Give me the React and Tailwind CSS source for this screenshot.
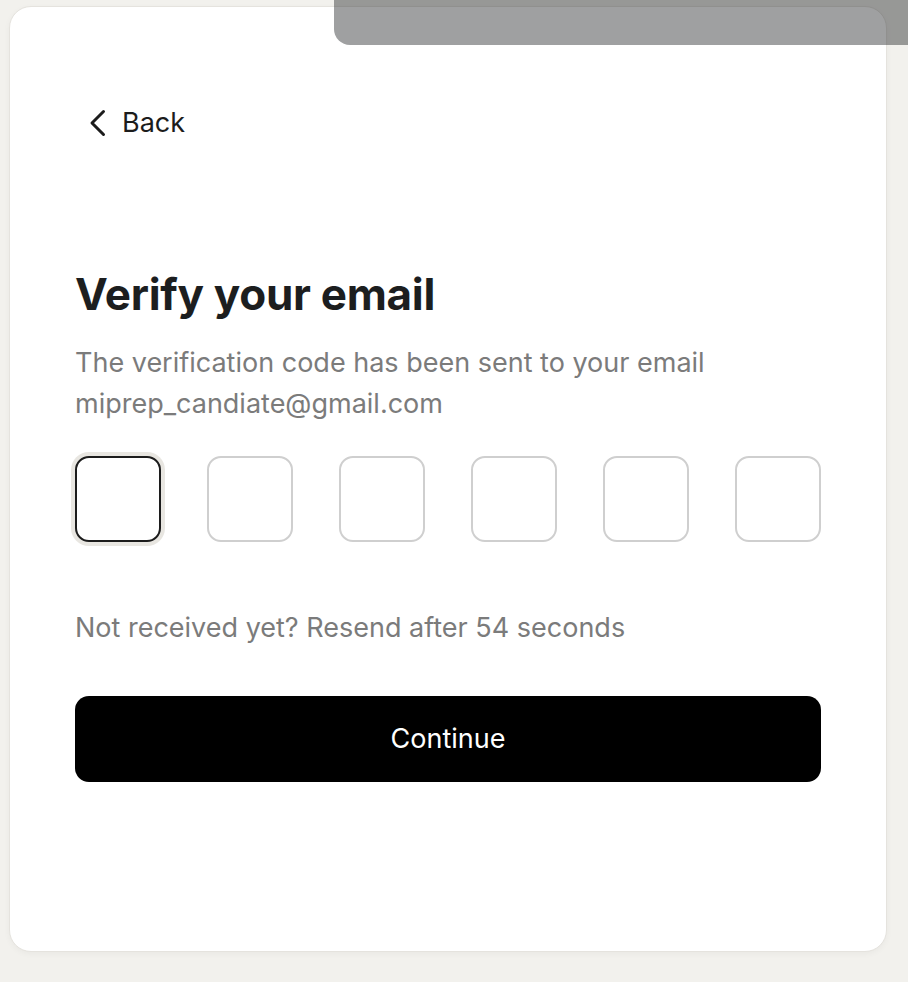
import React from 'react';

const Toast = () => (
    <div className="absolute top-0 right-0 left-[334px] h-[45px] rounded-bl-[16px] bg-[rgba(26,29,31,0.42)]" />
);

const BackIcon = () => (
    <svg width="17" height="28" viewBox="0 0 17 28" fill="none" stroke="currentColor" strokeWidth="3" strokeLinecap="round" strokeLinejoin="round">
        <path d="M14.5 2.5 L3 14 L14.5 25.5" />
    </svg>
);

const CodeBox = ({ active }) => (
    <div
        className={
            active
                ? 'w-[94px] h-[94px] -m-[4px] rounded-[18px] bg-[#e8e6e1] p-[4px]'
                : 'w-[86px] h-[86px]'
        }
    >
        <div
            className={`w-[86px] h-[86px] rounded-[14px] bg-white ${
                active ? 'border-2 border-[#1c1c1c]' : 'border-2 border-[#cfcfcf]'
            }`}
        />
    </div>
);

export default function App() {
    return (
        <div
            className="relative min-h-screen bg-[#f2f1ed] pt-[6px] pl-[9px] pr-[21px] pb-[31px]"
            style={{ fontFamily: 'Inter, "Noto Sans", sans-serif' }}
        >
            <div className="h-[946px] rounded-[22px] border border-[#e5e3de] bg-white shadow-[0_2px_6px_rgba(0,0,0,0.04)] px-[65px]">
                <button className="mt-[99px] h-[34px] ml-[14px] flex items-center gap-[16px] text-[#1c1c1c]">
                    <BackIcon />
                    <span className="text-[27px] leading-[32px]">Back</span>
                </button>

                <h1 className="mt-[127px] text-[44px] leading-[54px] font-bold tracking-[-0.3px] text-[#1c1e1f]">
                    Verify your email
                </h1>
                <p className="mt-[21px] text-[27px] leading-[41px] text-[#7b7b7b]">
                    The verification code has been sent to your email
                    <br />
                    miprep_candiate@gmail.com
                </p>

                <div className="mt-[32px] flex justify-between">
                    {[0, 1, 2, 3, 4, 5].map((i) => (
                        <CodeBox key={i} active={i === 0} />
                    ))}
                </div>

                <p className="mt-[70px] text-[27px] leading-[32px] text-[#7b7b7b]">
                    Not received yet? Resend after 54 seconds
                </p>

                <button className="mt-[52px] w-full h-[86px] rounded-[14px] bg-black text-white text-[27px]">
                    Continue
                </button>
            </div>
            <Toast />
        </div>
    );
}
